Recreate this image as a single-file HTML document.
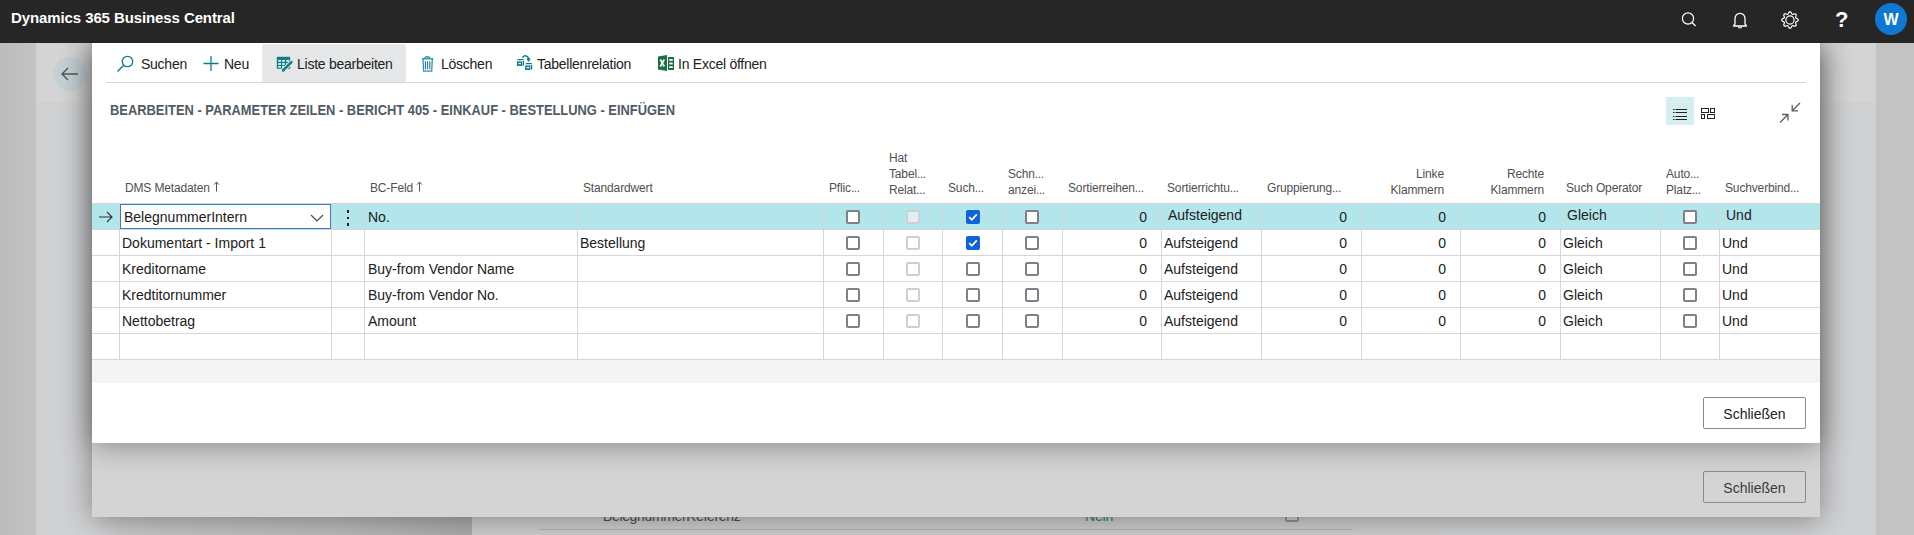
<!DOCTYPE html>
<html><head><meta charset="utf-8">
<style>
*{box-sizing:border-box}
html,body{margin:0;padding:0}
body{width:1914px;height:535px;overflow:hidden;position:relative;background:#cfcfcf;font-family:"Liberation Sans",sans-serif;color:#212121}
.abs{position:absolute}
#topbar{position:absolute;left:0;top:0;width:1914px;height:43px;background:#262626;z-index:10}
#brand{position:absolute;left:11px;top:9px;font-size:15px;font-weight:bold;color:#fff;letter-spacing:-0.1px;white-space:nowrap}
#bg-left{position:absolute;left:0;top:43px;width:36px;height:492px;background:linear-gradient(90deg,#bcbcbc,#c3c3c3)}
#bg-mid{position:absolute;left:36px;top:43px;width:1840px;height:492px;background:#d0d1d3}
#bg-midtop{position:absolute;left:36px;top:43px;width:1840px;height:61px;background:#d4d4d5;border-bottom:1px solid #cfcfd1}
#bg-right{position:absolute;left:1876px;top:43px;width:38px;height:492px;background:#c3c3c3}
#backbtn{position:absolute;left:53px;top:57px;width:34px;height:34px;border-radius:50%;background:#c5d1d4}
#page2{position:absolute;left:472px;top:500px;width:968px;height:40px;background:#cfcfcf}
#modal2{position:absolute;left:92px;top:43px;width:1728px;height:474px;background:#d4d4d4;box-shadow:0 2px 28px rgba(0,0,0,0.38);z-index:2}
#modal1{position:absolute;left:92px;top:43px;width:1728px;height:400px;background:#fff;box-shadow:0 2px 28px rgba(0,0,0,0.38);z-index:3;overflow:hidden}
.btn{position:absolute;width:103px;height:32px;border:1px solid #8a8886;border-radius:2px;font-size:14px;text-align:center;line-height:32px}
/* inner modal content positioned in page coords via wrapper */
#m1{position:absolute;left:-92px;top:-43px;width:1914px;height:535px}
.tb{position:absolute;top:0;height:38px;line-height:38px;font-size:14px;letter-spacing:-0.25px;white-space:nowrap;color:#212121}
#tbline{position:absolute;left:106px;top:82px;width:1700px;height:1px;background:#d2d6db}
#title{position:absolute;left:110px;top:102px;font-size:14px;font-weight:bold;color:#505b66;letter-spacing:0px;white-space:nowrap;transform:scaleX(0.921);transform-origin:0 0}
.el{font-style:normal;letter-spacing:-0.4px}
.hd{position:absolute;font-size:12px;line-height:16px;color:#505050;letter-spacing:-0.15px;white-space:nowrap}
.c{position:absolute;font-size:14px;line-height:25px;height:25px;margin-top:1px;white-space:nowrap;color:#212121}
.c.r{text-align:right}
.selrow{position:absolute;left:92px;width:1728px;height:25px;background:#b3e6eb}
.hl{position:absolute;left:92px;width:1728px;height:1px;background:#d5d6da}
.vl{position:absolute;top:204px;width:1px;height:156px;background:#d5d6da}
#hdrline{position:absolute;left:92px;top:203px;width:1728px;height:1px;background:#d5d6da}
.cb{position:absolute;width:14px;height:14px;border:2px solid #7f8187;border-radius:2px;background:#fff}
.cb.dis{border-color:#cfcfcf}
.cb.chk{background:#1062dc;border-color:#1062dc}
.cb svg{position:absolute;left:-2px;top:-2px}
.arrow{position:absolute;left:98px;width:16px;height:25px;padding-top:7px}
.arrow svg{display:block}
.inp{position:absolute;left:120px;width:211px;height:25px;background:#fff;border:1px solid #2f7fd1;font-size:14px;line-height:24px;padding-left:3px;white-space:nowrap}
.inp .chev{position:absolute;right:6px;top:9px}
.dots{position:absolute;left:346px;width:4px;height:25px}
.dots i{position:absolute;left:1px;width:2px;height:2.5px;background:#222}
.dots i:nth-child(1){top:6px}.dots i:nth-child(2){top:12.5px}.dots i:nth-child(3){top:19px}
#footband{position:absolute;left:92px;top:360px;width:1728px;height:23px;background:#f3f4f5}
</style></head><body>
<div id="topbar">
  <div id="brand">Dynamics 365 Business Central</div>
  <svg class="abs" style="left:1680px;top:10px" width="20" height="20" viewBox="0 0 20 20"><circle cx="8" cy="8.5" r="5.6" fill="none" stroke="#fff" stroke-width="1.2"/><path d="M12 12.5 L15.6 16" stroke="#fff" stroke-width="1.3"/></svg>
  <svg class="abs" style="left:1730px;top:10px" width="20" height="20" viewBox="0 0 20 20"><path d="M3.5 16 H16.5 L15 14 V8.5 A5 5.2 0 0 0 5 8.5 V14 Z" fill="none" stroke="#fff" stroke-width="1.3" stroke-linejoin="round"/><path d="M8.5 16.5 A1.5 1.5 0 0 0 11.5 16.5" fill="none" stroke="#fff" stroke-width="1.2"/></svg>
  <svg class="abs" style="left:1778.5px;top:9px" width="22" height="22" viewBox="0 0 22 22"><path d="M11.00 2.70 L11.32 2.76 L11.63 2.94 L11.92 3.21 L12.18 3.55 L12.40 3.94 L12.60 4.33 L12.78 4.69 L12.95 5.00 L13.13 5.23 L13.33 5.36 L13.58 5.41 L13.86 5.38 L14.20 5.28 L14.58 5.15 L15.00 5.01 L15.43 4.90 L15.86 4.84 L16.25 4.85 L16.60 4.94 L16.87 5.13 L17.06 5.40 L17.15 5.75 L17.16 6.14 L17.10 6.57 L16.99 7.00 L16.85 7.42 L16.72 7.80 L16.62 8.14 L16.59 8.42 L16.64 8.67 L16.77 8.87 L17.00 9.05 L17.31 9.22 L17.67 9.40 L18.06 9.60 L18.45 9.82 L18.79 10.08 L19.06 10.37 L19.24 10.68 L19.30 11.00 L19.24 11.32 L19.06 11.63 L18.79 11.92 L18.45 12.18 L18.06 12.40 L17.67 12.60 L17.31 12.78 L17.00 12.95 L16.77 13.13 L16.64 13.33 L16.59 13.58 L16.62 13.86 L16.72 14.20 L16.85 14.58 L16.99 15.00 L17.10 15.43 L17.16 15.86 L17.15 16.25 L17.06 16.60 L16.87 16.87 L16.60 17.06 L16.25 17.15 L15.86 17.16 L15.43 17.10 L15.00 16.99 L14.58 16.85 L14.20 16.72 L13.86 16.62 L13.58 16.59 L13.33 16.64 L13.13 16.77 L12.95 17.00 L12.78 17.31 L12.60 17.67 L12.40 18.06 L12.18 18.45 L11.92 18.79 L11.63 19.06 L11.32 19.24 L11.00 19.30 L10.68 19.24 L10.37 19.06 L10.08 18.79 L9.82 18.45 L9.60 18.06 L9.40 17.67 L9.22 17.31 L9.05 17.00 L8.87 16.77 L8.67 16.64 L8.42 16.59 L8.14 16.62 L7.80 16.72 L7.42 16.85 L7.00 16.99 L6.57 17.10 L6.14 17.16 L5.75 17.15 L5.40 17.06 L5.13 16.87 L4.94 16.60 L4.85 16.25 L4.84 15.86 L4.90 15.43 L5.01 15.00 L5.15 14.58 L5.28 14.20 L5.38 13.86 L5.41 13.58 L5.36 13.33 L5.23 13.13 L5.00 12.95 L4.69 12.78 L4.33 12.60 L3.94 12.40 L3.55 12.18 L3.21 11.92 L2.94 11.63 L2.76 11.32 L2.70 11.00 L2.76 10.68 L2.94 10.37 L3.21 10.08 L3.55 9.82 L3.94 9.60 L4.33 9.40 L4.69 9.22 L5.00 9.05 L5.23 8.87 L5.36 8.67 L5.41 8.42 L5.38 8.14 L5.28 7.80 L5.15 7.42 L5.01 7.00 L4.90 6.57 L4.84 6.14 L4.85 5.75 L4.94 5.40 L5.13 5.13 L5.40 4.94 L5.75 4.85 L6.14 4.84 L6.57 4.90 L7.00 5.01 L7.42 5.15 L7.80 5.28 L8.14 5.38 L8.42 5.41 L8.67 5.36 L8.87 5.23 L9.05 5.00 L9.22 4.69 L9.40 4.33 L9.60 3.94 L9.82 3.55 L10.08 3.21 L10.37 2.94 L10.68 2.76 L11.00 2.70 Z" fill="none" stroke="#fff" stroke-width="1.2" stroke-linejoin="round"/><circle cx="11" cy="11" r="4.1" fill="none" stroke="#fff" stroke-width="1.2"/></svg>
  <div class="abs" style="left:1835px;top:7px;font-size:22px;line-height:26px;font-weight:bold;color:#fff">?</div>
  <div class="abs" style="left:1875px;top:3px;width:32px;height:32px;border-radius:50%;background:#0f78d4;color:#fff;font-weight:bold;font-size:16px;text-align:center;line-height:33px">W</div>
</div>
<div id="bg-mid"></div>
<div id="bg-midtop"></div>
<div id="bg-left"></div>
<div id="bg-right"></div>
<div id="backbtn"><svg width="34" height="34" viewBox="0 0 34 34"><path d="M9 17 H25 M15 11 L9 17 L15 23" fill="none" stroke="#555" stroke-width="1.4"/></svg></div>
<div class="abs" style="left:36px;top:517px;width:436px;height:18px;background:linear-gradient(90deg,#d0d1d3 0px,#d0d1d3 56px,#c6c6c7 120px,#bcbcbc 300px,#acacac 436px)"></div>
<div id="page2">
  <div class="abs" style="left:131px;top:8px;font-size:14px;color:#505050;letter-spacing:-0.35px">BelegnummerReferenz</div>
  <div class="abs" style="left:613px;top:8px;font-size:14px;color:#347b85;letter-spacing:-0.2px">Nein</div>
  <div class="abs" style="left:813px;top:8px;width:14px;height:14px;border:2px solid #959595;border-radius:2px"></div>
  <div class="abs" style="left:68px;top:29px;width:813px;height:1px;background:#b4b4b4"></div>
</div>
<div id="modal2">
  <div class="btn" style="left:1611px;top:428px;color:#3b3b3b;border-color:#8a8a8a">Schließen</div>
</div>
<div id="modal1"><div id="m1">
  <div class="abs" style="left:262px;top:44px;width:144px;height:38px;background:#e6e7e9;border-radius:2px"></div>
  <svg class="abs" style="left:115px;top:54px" width="20" height="20" viewBox="0 0 20 20"><circle cx="12.5" cy="7.5" r="5.2" fill="none" stroke="#0a7f88" stroke-width="1.3"/><path d="M8.8 11.2 L2.5 17.5" stroke="#0a7f88" stroke-width="1.4"/></svg>
  <div class="tb" style="left:141px;top:45px">Suchen</div>
  <svg class="abs" style="left:202px;top:55px" width="18" height="18" viewBox="0 0 18 18"><path d="M9 1 V16 M1.5 8.5 H16.5" stroke="#0a7f88" stroke-width="1.3"/></svg>
  <div class="tb" style="left:224px;top:45px">Neu</div>
  <svg class="abs" style="left:276px;top:56px" width="20" height="18" viewBox="0 0 20 18"><rect x="0.8" y="0.8" width="13.4" height="12" fill="#0a7f88"/><g fill="#e6e7e9"><rect x="2.1" y="3.9" width="2.9" height="1.9"/><rect x="6.0" y="3.9" width="2.9" height="1.9"/><rect x="10.2" y="3.9" width="2.8" height="1.9"/><rect x="2.1" y="7.1" width="2.9" height="1.8"/><rect x="6.0" y="7.1" width="2.9" height="1.8"/><rect x="10.2" y="7.1" width="2.8" height="1.8"/><rect x="2.1" y="10" width="2.9" height="1.7"/><rect x="6.0" y="10" width="2.9" height="1.7"/><rect x="10.2" y="10" width="2.8" height="1.7"/></g><path d="M5.5 16 L16 5.5" stroke="#e6e7e9" stroke-width="4.4"/><path d="M7.6 13.9 L15.4 6.1" stroke="#0a7f88" stroke-width="2.5" stroke-linecap="round"/><path d="M5.8 15.8 L6.4 12.6 L9 15.2 Z" fill="#0a7f88"/></svg>
  <div class="tb" style="left:297px;top:45px">Liste bearbeiten</div>
  <svg class="abs" style="left:420px;top:54px" width="16" height="20" viewBox="0 0 16 20"><path d="M4.5 4.6 A3 2.6 0 0 1 10.2 4.6" fill="none" stroke="#2798b0" stroke-width="1.4"/><path d="M2 4.8 H13.3" stroke="#2798b0" stroke-width="1.4"/><path d="M3 5 L3.6 17.2 H11.7 L12.3 5" fill="none" stroke="#2798b0" stroke-width="1.3"/><path d="M5.4 7.2 V15.3 M7.6 7.2 V15.3 M9.8 7.2 V15.3" stroke="#2b74a0" stroke-width="1.1"/></svg>
  <div class="tb" style="left:441px;top:45px">Löschen</div>
  <svg class="abs" style="left:514px;top:52px" width="20" height="20" viewBox="0 0 20 20"><g fill="#0a7f88"><g transform="translate(3,7)"><path d="M0.2 1 Q0.4 0 1.5 0 H6 Q6.8 0 6.8 1 V1.3 H0.2 Z"/><path d="M5.6 2 H7 V6.2 L5.6 7 Z"/><path d="M0 2.6 H5 V7 H0 Z M1.5 4.1 V5.2 H4 V4.1 Z" fill-rule="evenodd"/></g><g transform="translate(11.2,11)"><path d="M0.2 1 Q0.4 0 1.5 0 H6 Q6.8 0 6.8 1 V1.3 H0.2 Z"/><path d="M5.6 2 H7 V6.2 L5.6 7 Z"/><path d="M0 2.6 H5 V7 H0 Z M1.5 4.1 V5.2 H4 V4.1 Z" fill-rule="evenodd"/></g></g><path d="M8.4 5.4 Q11.5 1.8 14.4 5.8 V7" fill="none" stroke="#0a7f88" stroke-width="1.5"/><path d="M12.2 6.4 L14.5 9.9 L16.8 6.4 Z" fill="#0a7f88"/></svg>
  <div class="tb" style="left:537px;top:45px">Tabellenrelation</div>
  <svg class="abs" style="left:657px;top:54px" width="18" height="18" viewBox="0 0 18 18"><path d="M1 2.5 L10 1 V17 L1 15.5 Z" fill="#1d6f42"/><path d="M3.3 5.5 L7.3 12.5 M7.3 5.5 L3.3 12.5" stroke="#fff" stroke-width="1.6"/><rect x="11" y="3" width="6" height="13" fill="#1d6f42"/><g fill="#fff"><rect x="12.3" y="5" width="3.4" height="1.8"/><rect x="12.3" y="8.6" width="3.4" height="1.8"/><rect x="12.3" y="12.2" width="3.4" height="1.8"/></g></svg>
  <div class="tb" style="left:678px;top:45px">In Excel öffnen</div>
  <div id="tbline"></div>
  <div id="title">BEARBEITEN - PARAMETER ZEILEN - BERICHT 405 - EINKAUF - BESTELLUNG - EINFÜGEN</div>
  <div class="abs" style="left:1666px;top:97px;width:28px;height:28px;background:#d5eef2"></div>
  <svg class="abs" style="left:1672px;top:107px" width="16" height="14" viewBox="0 0 16 14"><g fill="#222"><rect x="1" y="2" width="1.5" height="1"/><rect x="3.5" y="2" width="11.5" height="1"/><rect x="1" y="5" width="1.5" height="1"/><rect x="3.5" y="5" width="11.5" height="1"/><rect x="1" y="9" width="1.5" height="1"/><rect x="3.5" y="9" width="11.5" height="1"/><rect x="1" y="12" width="1.5" height="1"/><rect x="3.5" y="12" width="11.5" height="1"/></g></svg>
  <svg class="abs" style="left:1700px;top:107px" width="16" height="13" viewBox="0 0 16 13"><g fill="none" stroke="#222" stroke-width="1"><rect x="1.5" y="1.5" width="7" height="4"/><rect x="10.5" y="1.5" width="4" height="4"/><rect x="1.5" y="7.5" width="3" height="4"/><rect x="7.5" y="7.5" width="7" height="4"/></g></svg>
  <svg class="abs" style="left:1777px;top:100px" width="26" height="26" viewBox="0 0 26 26"><g fill="none" stroke="#605e5c" stroke-width="1.3"><path d="M23 3 L15.2 10.8 M15.2 5 V10.8 H21"/><path d="M3 22.5 L11 14.5 M5 14.5 H11 V20.5"/></g></svg>
  <div id="hdrline"></div>
<div class="hd" style="left:125px;top:180px">DMS Metadaten<svg style="position:absolute;right:-10px;top:1px" width="7" height="11" viewBox="0 0 7 11"><path d="M3.5 10.5 V1 M1 3.6 L3.5 1 L6 3.6" fill="none" stroke="#555" stroke-width="1"/></svg></div>
<div class="hd" style="left:370px;top:180px">BC-Feld<svg style="position:absolute;right:-10px;top:1px" width="7" height="11" viewBox="0 0 7 11"><path d="M3.5 10.5 V1 M1 3.6 L3.5 1 L6 3.6" fill="none" stroke="#555" stroke-width="1"/></svg></div>
<div class="hd" style="left:583px;top:180px">Standardwert</div>
<div class="hd" style="left:829px;top:180px">Pflic<i class="el">...</i></div>
<div class="hd" style="left:889px;top:150px">Hat<br>Tabel<i class="el">...</i><br>Relat<i class="el">...</i></div>
<div class="hd" style="left:948px;top:180px">Such<i class="el">...</i></div>
<div class="hd" style="left:1008px;top:166px">Schn<i class="el">...</i><br>anzei<i class="el">...</i></div>
<div class="hd" style="left:1068px;top:180px">Sortierreihen<i class="el">...</i></div>
<div class="hd" style="left:1167px;top:180px">Sortierrichtu<i class="el">...</i></div>
<div class="hd" style="left:1267px;top:180px">Gruppierung<i class="el">...</i></div>
<div class="hd" style="right:470px;top:166px;text-align:right">Linke<br>Klammern</div>
<div class="hd" style="right:370px;top:166px;text-align:right">Rechte<br>Klammern</div>
<div class="hd" style="left:1566px;top:180px">Such Operator</div>
<div class="hd" style="left:1666px;top:166px">Auto<i class="el">...</i><br>Platz<i class="el">...</i></div>
<div class="hd" style="left:1725px;top:180px">Suchverbind<i class="el">...</i></div>
<div class="selrow" style="top:204px"></div>
<div class="hl" style="top:229px"></div>
<div class="arrow" style="top:204px"><svg width="16" height="12" viewBox="0 0 16 12"><path d="M1 6 H14 M9 1 L14 6 L9 11" fill="none" stroke="#333" stroke-width="1.1"/></svg></div>
<div class="inp" style="top:204px"><span>BelegnummerIntern</span><svg class="chev" width="14" height="8" viewBox="0 0 14 8"><path d="M1 1 L7 7 L13 1" fill="none" stroke="#444" stroke-width="1.1"/></svg></div>
<div class="dots" style="top:204px"><i></i><i></i><i></i></div>
<div class="c" style="left:368px;top:204px">No.</div>
<div class="cb" style="left:846px;top:210px"></div>
<div class="cb dis" style="left:906px;top:210px;background:#dff0f3"></div>
<div class="cb chk" style="left:966px;top:210px"><svg width="14" height="14" viewBox="0 0 14 14"><path d="M3.2 7.2 L5.8 9.8 L10.8 4.4" fill="none" stroke="#fff" stroke-width="1.8"/></svg></div>
<div class="cb" style="left:1025px;top:210px"></div>
<div class="c r" style="right:767px;top:204px">0</div>
<div class="c" style="left:1168px;top:202px">Aufsteigend</div>
<div class="c r" style="right:567px;top:204px">0</div>
<div class="c r" style="right:468px;top:204px">0</div>
<div class="c r" style="right:368px;top:204px">0</div>
<div class="c" style="left:1567px;top:202px">Gleich</div>
<div class="cb" style="left:1683px;top:210px"></div>
<div class="c" style="left:1726px;top:202px">Und</div>
<div class="hl" style="top:255px"></div>
<div class="c" style="left:122px;top:230px">Dokumentart - Import 1</div>
<div class="c" style="left:580px;top:230px">Bestellung</div>
<div class="cb" style="left:846px;top:236px"></div>
<div class="cb dis" style="left:906px;top:236px"></div>
<div class="cb chk" style="left:966px;top:236px"><svg width="14" height="14" viewBox="0 0 14 14"><path d="M3.2 7.2 L5.8 9.8 L10.8 4.4" fill="none" stroke="#fff" stroke-width="1.8"/></svg></div>
<div class="cb" style="left:1025px;top:236px"></div>
<div class="c r" style="right:767px;top:230px">0</div>
<div class="c" style="left:1164px;top:230px">Aufsteigend</div>
<div class="c r" style="right:567px;top:230px">0</div>
<div class="c r" style="right:468px;top:230px">0</div>
<div class="c r" style="right:368px;top:230px">0</div>
<div class="c" style="left:1563px;top:230px">Gleich</div>
<div class="cb" style="left:1683px;top:236px"></div>
<div class="c" style="left:1722px;top:230px">Und</div>
<div class="hl" style="top:281px"></div>
<div class="c" style="left:122px;top:256px">Kreditorname</div>
<div class="c" style="left:368px;top:256px">Buy-from Vendor Name</div>
<div class="cb" style="left:846px;top:262px"></div>
<div class="cb dis" style="left:906px;top:262px"></div>
<div class="cb" style="left:966px;top:262px"></div>
<div class="cb" style="left:1025px;top:262px"></div>
<div class="c r" style="right:767px;top:256px">0</div>
<div class="c" style="left:1164px;top:256px">Aufsteigend</div>
<div class="c r" style="right:567px;top:256px">0</div>
<div class="c r" style="right:468px;top:256px">0</div>
<div class="c r" style="right:368px;top:256px">0</div>
<div class="c" style="left:1563px;top:256px">Gleich</div>
<div class="cb" style="left:1683px;top:262px"></div>
<div class="c" style="left:1722px;top:256px">Und</div>
<div class="hl" style="top:307px"></div>
<div class="c" style="left:122px;top:282px">Kredtitornummer</div>
<div class="c" style="left:368px;top:282px">Buy-from Vendor No.</div>
<div class="cb" style="left:846px;top:288px"></div>
<div class="cb dis" style="left:906px;top:288px"></div>
<div class="cb" style="left:966px;top:288px"></div>
<div class="cb" style="left:1025px;top:288px"></div>
<div class="c r" style="right:767px;top:282px">0</div>
<div class="c" style="left:1164px;top:282px">Aufsteigend</div>
<div class="c r" style="right:567px;top:282px">0</div>
<div class="c r" style="right:468px;top:282px">0</div>
<div class="c r" style="right:368px;top:282px">0</div>
<div class="c" style="left:1563px;top:282px">Gleich</div>
<div class="cb" style="left:1683px;top:288px"></div>
<div class="c" style="left:1722px;top:282px">Und</div>
<div class="hl" style="top:333px"></div>
<div class="c" style="left:122px;top:308px">Nettobetrag</div>
<div class="c" style="left:368px;top:308px">Amount</div>
<div class="cb" style="left:846px;top:314px"></div>
<div class="cb dis" style="left:906px;top:314px"></div>
<div class="cb" style="left:966px;top:314px"></div>
<div class="cb" style="left:1025px;top:314px"></div>
<div class="c r" style="right:767px;top:308px">0</div>
<div class="c" style="left:1164px;top:308px">Aufsteigend</div>
<div class="c r" style="right:567px;top:308px">0</div>
<div class="c r" style="right:468px;top:308px">0</div>
<div class="c r" style="right:368px;top:308px">0</div>
<div class="c" style="left:1563px;top:308px">Gleich</div>
<div class="cb" style="left:1683px;top:314px"></div>
<div class="c" style="left:1722px;top:308px">Und</div>
<div class="hl" style="top:359px"></div>
<div class="vl" style="left:119px"></div>
<div class="vl" style="left:331px"></div>
<div class="vl" style="left:364px"></div>
<div class="vl" style="left:577px"></div>
<div class="vl" style="left:823px"></div>
<div class="vl" style="left:883px"></div>
<div class="vl" style="left:942px"></div>
<div class="vl" style="left:1002px"></div>
<div class="vl" style="left:1062px"></div>
<div class="vl" style="left:1161px"></div>
<div class="vl" style="left:1261px"></div>
<div class="vl" style="left:1361px"></div>
<div class="vl" style="left:1460px"></div>
<div class="vl" style="left:1560px"></div>
<div class="vl" style="left:1660px"></div>
<div class="vl" style="left:1719px"></div>
  <div id="footband"></div>
  <div class="btn" style="left:1703px;top:397px;color:#212121">Schließen</div>
</div></div>
</body></html>
